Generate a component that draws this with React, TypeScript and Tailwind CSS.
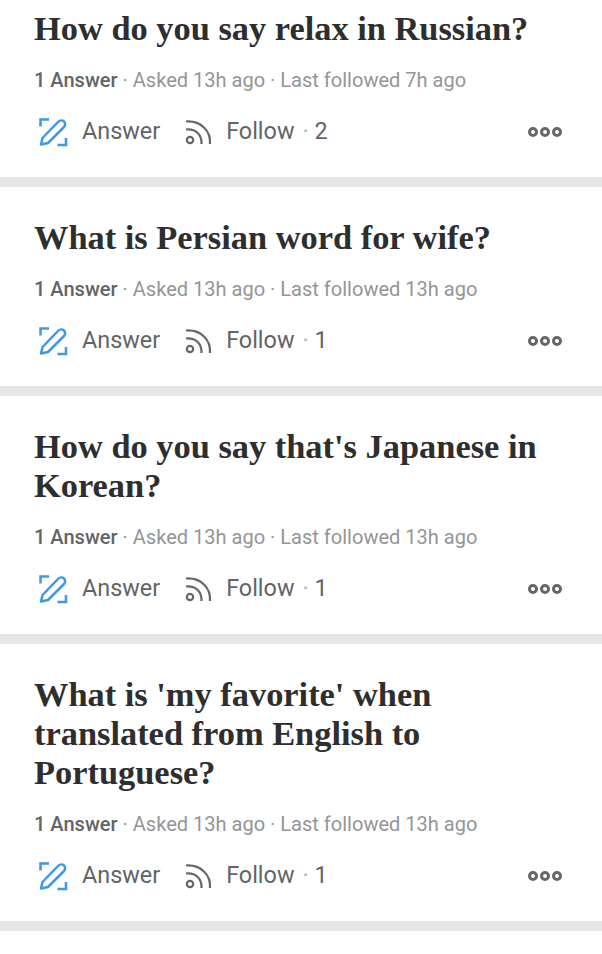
import React from 'react';

interface Question {
  lines: string[];
  followed: string;
  followers: number;
}

const questions: Question[] = [
  { lines: ['How do you say relax in Russian?'], followed: '7h', followers: 2 },
  { lines: ['What is Persian word for wife?'], followed: '13h', followers: 1 },
  { lines: ["How do you say that's Japanese in", 'Korean?'], followed: '13h', followers: 1 },
  { lines: ["What is 'my favorite' when", 'translated from English to', 'Portuguese?'], followed: '13h', followers: 1 },
];

const AnswerIcon = () => (
  <svg width="30" height="30" viewBox="0 0 30 30" fill="none" stroke="#3f97e8" strokeWidth="2.5">
    <path d="M11 2.5H2.5V9.5" />
    <path d="M19.5 28H28V21" />
    <path d="M3 27.5L4.5 21L20.5 4.5C22 3 24.5 3 26 4.5C27.5 6 27.5 8.5 26 10L10 26L3 27.5Z" strokeLinejoin="round" />
  </svg>
);

const FollowIcon = () => (
  <svg width="28" height="28" viewBox="0 0 28 28" fill="none" stroke="#666666" strokeWidth="2.2">
    <circle cx="6" cy="22" r="3.2" />
    <path d="M2 11.5C12 10.5 18 17 17.5 26" />
    <path d="M2 3.5C17 2.5 27 13 26 26" />
  </svg>
);

const QuestionCard = ({ q, first }: { q: Question; first: boolean }) => (
  <div className={first ? 'px-[34px] pt-[9px] pb-[30px] bg-white' : 'px-[34px] pt-[31px] pb-[30px] bg-white'}>
    <h2 className="font-['Liberation_Serif',serif] font-bold text-[34.4px] leading-[39px] text-[#2e2e2e] whitespace-nowrap">
      {q.lines.map(line => (
        <div key={line}>{line}</div>
      ))}
    </h2>
    <p className="mt-[20px] text-[20.05px] leading-[24px] text-[#939598] whitespace-nowrap">
      <span className="font-medium text-[#636466]">1 Answer</span> · Asked 13h ago · Last followed {q.followed} ago
    </p>
    <div className="mt-[25px] h-[30px] flex items-center text-[#636466] text-[23.4px]">
      <span className="ml-[4px] flex"><AnswerIcon /></span>
      <span className="ml-[14px]">Answer</span>
      <span className="ml-[24px] flex"><FollowIcon /></span>
      <span className="ml-[14px]">Follow</span>
      <span className="ml-[8px] text-[#b0b2b4]">·</span>
      <span className="ml-[6px]">{q.followers}</span>
      <span className="ml-auto mr-[6px] flex gap-[2px]">
        <i className="block w-[10px] h-[10px] rounded-full border-[3px] border-[#666666]" />
        <i className="block w-[10px] h-[10px] rounded-full border-[3px] border-[#666666]" />
        <i className="block w-[10px] h-[10px] rounded-full border-[3px] border-[#666666]" />
      </span>
    </div>
  </div>
);

export default function App() {
  return (
    <div className="w-[602px] h-[954px] overflow-hidden bg-white font-['Roboto',sans-serif]">
      {questions.map((q, i) => (
        <div key={q.lines[0]} className="border-b-[10px] border-[#e6e6e6]">
          <QuestionCard q={q} first={i === 0} />
        </div>
      ))}
    </div>
  );
}
